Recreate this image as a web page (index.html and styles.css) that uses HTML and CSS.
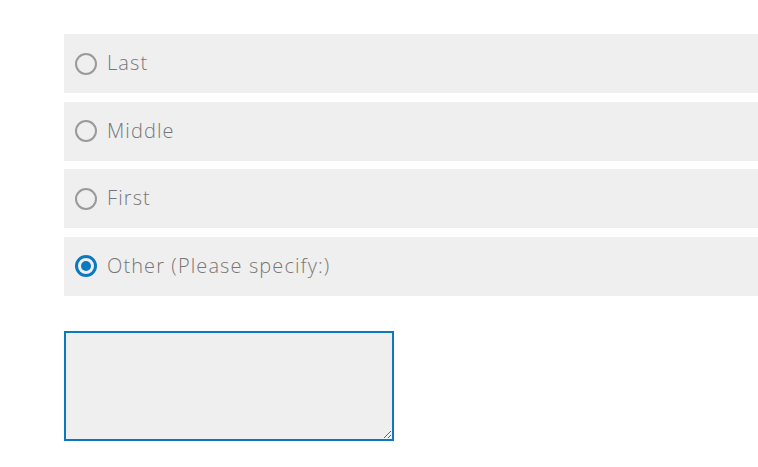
FILE: index.html
```html
<!DOCTYPE html>
<html>
<head>
<meta charset="utf-8">
<link rel="stylesheet" href="styles.css">
</head>
<body>
<div class="page">
  <div class="options">
    <label class="option"><span class="radio"></span><span class="label">Last</span></label>
    <label class="option"><span class="radio"></span><span class="label">Middle</span></label>
    <label class="option"><span class="radio"></span><span class="label">First</span></label>
    <label class="option"><span class="radio checked"></span><span class="label">Other (Please specify:)</span></label>
  </div>
  <textarea class="specify"></textarea>
</div>
</body>
</html>
```
FILE: styles.css
```css
html, body {
  margin: 0;
  padding: 0;
  background: #ffffff;
}
.page {
  padding: 34px 0 0 64px;
}
.options {
  display: flex;
  flex-direction: column;
  gap: 8.5px;
}
.option {
  display: flex;
  align-items: center;
  height: 59px;
  background: #efefef;
  padding-left: 11px;
  box-sizing: border-box;
}
.radio {
  width: 22px;
  height: 22px;
  border: 2px solid #9a9a9a;
  border-radius: 50%;
  box-sizing: border-box;
  flex: none;
  position: relative;
}
.radio.checked {
  border: 3px solid #0b79bf;
}
.radio.checked::after {
  content: "";
  position: absolute;
  left: 3px;
  top: 3px;
  width: 10px;
  height: 10px;
  border-radius: 50%;
  background: #0b79bf;
}
.label {
  margin-left: 10px;
  margin-top: -2px;
  font-family: "Open Sans", sans-serif;
  font-weight: 300;
  font-size: 20px;
  color: #777777;
  letter-spacing: 1.1px;
}
.specify {
  display: block;
  margin-top: 35px;
  width: 330px;
  height: 110px;
  box-sizing: border-box;
  border: 2px solid #0b79bf;
  background: #efefef;
  outline: none;
  padding: 0;
}
```
